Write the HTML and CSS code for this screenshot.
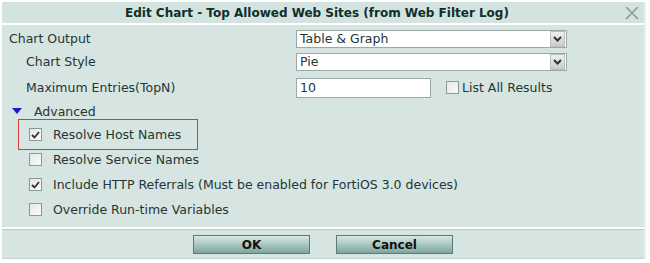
FILE: index.html
```html
<!DOCTYPE html>
<html>
<head>
  <meta charset="UTF-8">
  <link rel="stylesheet" href="styles.css">
</head>
<body>
  <div class="dialog">
    <div class="title-bar">
      <span class="title">Edit Chart - Top Allowed Web Sites (from Web Filter Log)</span>
      <span class="close-btn">
        <svg width="14" height="14" viewBox="0 0 14 14"><path d="M1 1L13 13M13 1L1 13" stroke="#8a9c99" stroke-width="1.6" fill="none"/></svg>
      </span>
    </div>
    <div class="content">
      <div class="row">
        <span class="label">Chart Output</span>
        <span class="select">Table &amp; Graph<span class="select-arrow"><svg width="9" height="6" viewBox="0 0 9 6"><path d="M1 1L4.5 4.5L8 1" stroke="#333" stroke-width="2" fill="none"/></svg></span></span>
      </div>
      <div class="row">
        <span class="label sub">Chart Style</span>
        <span class="select">Pie<span class="select-arrow"><svg width="9" height="6" viewBox="0 0 9 6"><path d="M1 1L4.5 4.5L8 1" stroke="#333" stroke-width="2" fill="none"/></svg></span></span>
      </div>
      <div class="row tall">
        <span class="label sub">Maximum Entries(TopN)</span>
        <span class="text-input">10</span>
        <span class="check-inline"><span class="checkbox"></span>List All Results</span>
      </div>
      <div class="advanced">
        <svg width="10" height="6" viewBox="0 0 10 6"><path d="M0 0H10L5 6Z" fill="#1a1acc"/></svg>
        <span>Advanced</span>
      </div>
      <div class="option highlighted"><span class="checkbox checked"><svg width="9" height="8" viewBox="0 0 9 8"><path d="M1 4L3.5 6.5L8 1" stroke="#333" stroke-width="1.8" fill="none"/></svg></span>Resolve Host Names</div>
      <div class="option"><span class="checkbox"></span>Resolve Service Names</div>
      <div class="option"><span class="checkbox checked"><svg width="9" height="8" viewBox="0 0 9 8"><path d="M1 4L3.5 6.5L8 1" stroke="#333" stroke-width="1.8" fill="none"/></svg></span>Include HTTP Referrals (Must be enabled for FortiOS 3.0 devices)</div>
      <div class="option"><span class="checkbox"></span>Override Run-time Variables</div>
    </div>
    <div class="footer">
      <button class="btn">OK</button>
      <button class="btn">Cancel</button>
    </div>
  </div>
</body>
</html>
```

FILE: styles.css
```css
body {
  margin: 0;
  background: #fff;
  font-family: "DejaVu Sans", Verdana, sans-serif;
  font-size: 12.5px;
  color: #243633;
}
.dialog {
  width: 642px;
  margin: 2px 0 0 2px;
  background: #d6e5e2;
  border-right: 2px solid #e8f0ee;
}
.title-bar {
  height: 21px;
  display: flex;
  align-items: center;
  justify-content: center;
  position: relative;
  border-bottom: 2px solid #fff;
  background: #d3e3df;
  padding-right: 12px;
}
.title {
  font-weight: bold;
  font-size: 12px;
  color: #102e2a;
}
.close-btn {
  position: absolute;
  right: 5px;
  top: 4px;
  display: flex;
}
.content {
  padding: 2px 0 5px 7px;
}
.row {
  display: flex;
  align-items: center;
  height: 23px;
}
.row.tall {
  height: 29px;
}
.label {
  width: 287px;
  flex-shrink: 0;
}
.label.sub {
  padding-left: 17px;
  width: 270px;
}
.select {
  width: 266px;
  height: 16px;
  line-height: 16px;
  background: #fff;
  border: 1px solid #9aa8a6;
  padding-left: 3px;
  position: relative;
}
.select-arrow {
  position: absolute;
  right: 1px;
  top: 0;
  width: 15px;
  height: 16px;
  background: linear-gradient(#f0f0f0, #c8cccb);
  border: 1px solid #b8bfbd;
  box-sizing: border-box;
  display: flex;
  align-items: center;
  justify-content: center;
}
.text-input {
  width: 130px;
  height: 18px;
  line-height: 18px;
  background: #fff;
  border: 1px solid #9aa8a6;
  padding-left: 3px;
}
.check-inline {
  display: flex;
  align-items: center;
  margin-left: 15px;
}
.check-inline .checkbox {
  margin-right: 3px;
}
.checkbox {
  width: 11px;
  height: 11px;
  border: 1px solid #8a9896;
  background: linear-gradient(135deg, #e4e8e7, #fbfbfb);
  display: inline-flex;
  align-items: center;
  justify-content: center;
  flex-shrink: 0;
}
.advanced {
  display: flex;
  align-items: center;
  height: 18px;
  padding-left: 3px;
}
.advanced svg {
  margin-right: 12px;
}
.option {
  display: flex;
  align-items: center;
  height: 25px;
  padding-left: 20px;
}
.option .checkbox {
  margin-right: 11px;
}
.option.highlighted {
  margin: -1px 0 -3px 9px;
  padding-left: 10px;
  width: 180px;
  height: 31px;
  border: 1px solid #d83a3a;
  box-sizing: border-box;
}
.footer {
  border-top: 2px solid #fff;
  display: flex;
  justify-content: center;
  gap: 26px;
  padding: 6px 0 4px;
  border-bottom: 1px solid #c2d2cf;
  box-shadow: inset 0 1px 0 #b5c8c4;
}
.btn {
  width: 117px;
  height: 19px;
  font-family: "DejaVu Sans", Verdana, sans-serif;
  font-weight: bold;
  font-size: 12px;
  color: #111;
  border: 1px solid #5b7c75;
  background: linear-gradient(#d9e8e4, #a9c7c0 50%, #7ca79d);
  padding: 0;
}
```
